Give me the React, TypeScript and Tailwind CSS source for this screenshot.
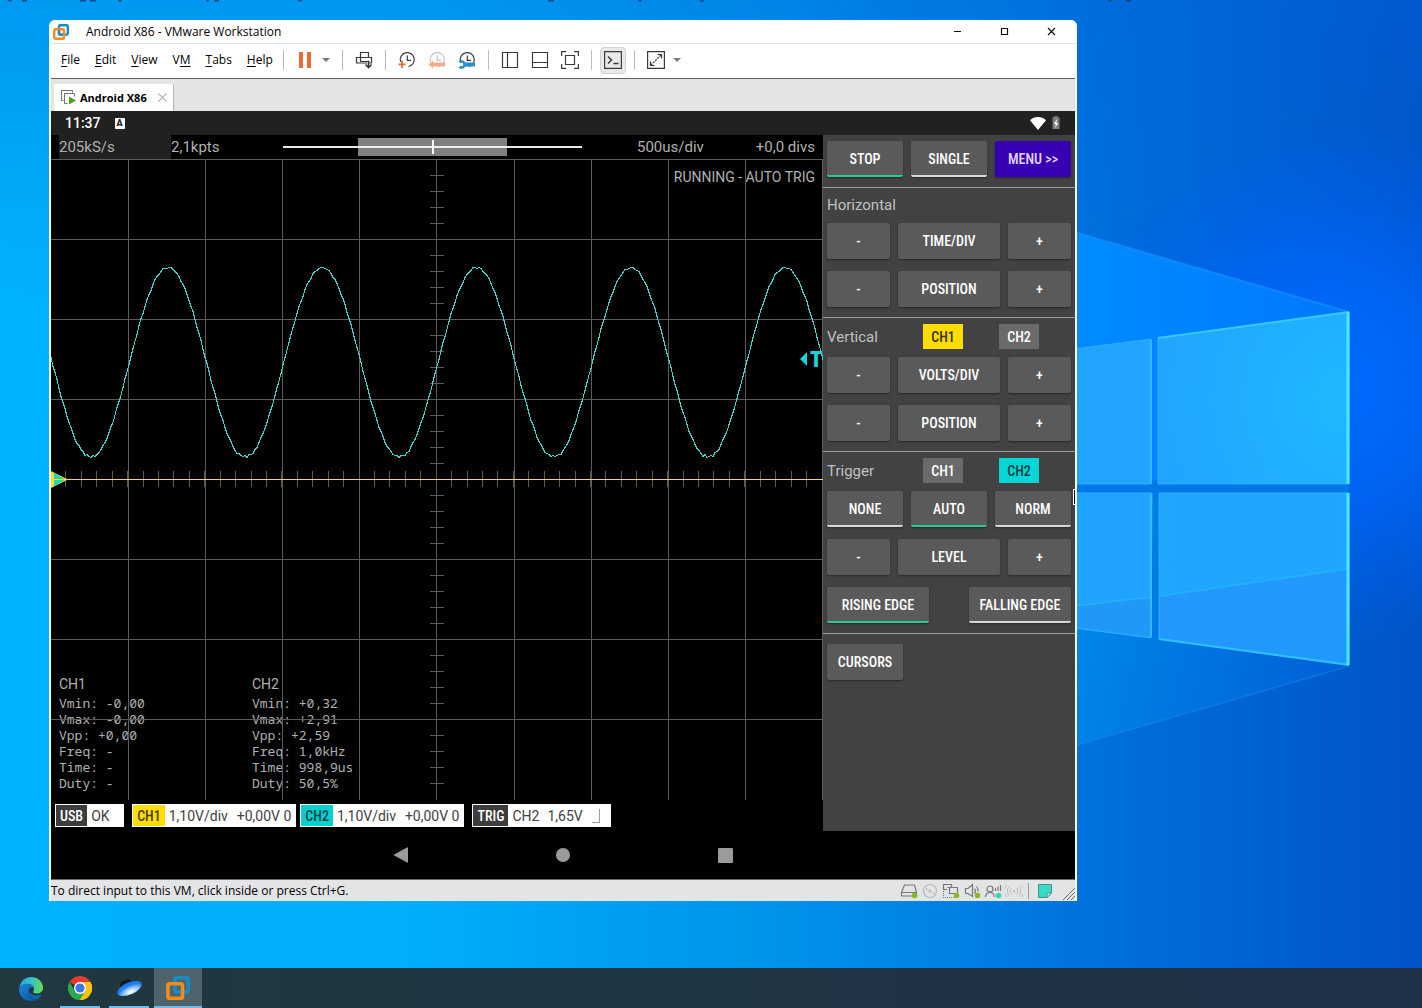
import React from "react";

const CONDENSED = "font-['Roboto_Condensed','Roboto',sans-serif]";
const ROBOTO = "font-['Roboto',sans-serif]";

function Wallpaper() {
  return (
    <svg
      className="absolute inset-0 h-full w-full"
      viewBox="0 0 1422 1008"
      preserveAspectRatio="none"
      aria-hidden="true"
    >
      <defs>
        <linearGradient id="wp-base" x1="0" y1="0" x2="1422" y2="0" gradientUnits="userSpaceOnUse">
          <stop offset="0" stopColor="#00b2fc" />
          <stop offset="0.3" stopColor="#00adfb" />
          <stop offset="0.55" stopColor="#0093ec" />
          <stop offset="0.78" stopColor="#006fdc" />
          <stop offset="1" stopColor="#0054c8" />
        </linearGradient>
        <linearGradient id="wp-top" x1="0" y1="0" x2="0" y2="300" gradientUnits="userSpaceOnUse">
          <stop offset="0" stopColor="#0065dc" stopOpacity="0.32" />
          <stop offset="1" stopColor="#0065dc" stopOpacity="0" />
        </linearGradient>
        <radialGradient id="wp-glow" cx="1330" cy="385" r="260" gradientUnits="userSpaceOnUse">
          <stop offset="0" stopColor="#006cff" />
          <stop offset="0.45" stopColor="#0066fb" stopOpacity="0.8" />
          <stop offset="1" stopColor="#0060f0" stopOpacity="0" />
        </radialGradient>
        <linearGradient id="wp-beam" x1="1077" y1="0" x2="1349" y2="0" gradientUnits="userSpaceOnUse">
          <stop offset="0" stopColor="#008cff" />
          <stop offset="1" stopColor="#0078ff" />
        </linearGradient>
        <linearGradient id="wp-low" x1="1077" y1="640" x2="1330" y2="700" gradientUnits="userSpaceOnUse">
          <stop offset="0" stopColor="#0086e8" />
          <stop offset="1" stopColor="#0060d8" />
        </linearGradient>
        <radialGradient id="wp-pane" cx="1349" cy="400" r="210" gradientUnits="userSpaceOnUse">
          <stop offset="0" stopColor="#20b8ff" />
          <stop offset="1" stopColor="#20a4ff" />
        </radialGradient>
      </defs>
      <rect width="1422" height="1008" fill="url(#wp-base)" />
      <rect width="1422" height="300" fill="url(#wp-top)" />
      <rect width="1422" height="1008" fill="url(#wp-glow)" />
      <polygon points="900,182 1349,312 1349,490 900,490" fill="url(#wp-beam)" />
      <polygon points="900,490 1349,490 1349,666 900,797" fill="url(#wp-low)" />
      <rect x="1050" y="480" width="299" height="18" fill="#0078e8" />
      <path d="M1050 225 1349 312" stroke="#1c9cff" strokeWidth="2" opacity="0.5" />
      <path d="M1050 753 1349 666" stroke="#1488ee" strokeWidth="1.5" opacity="0.5" />
      <g stroke="#3db8ff" strokeOpacity="0.7">
        <polygon points="1050,352 1151,339 1151,484 1050,484" fill="#20a4ff" />
        <polygon points="1158,338 1349,312 1349,484 1158,484" fill="url(#wp-pane)" />
        <polygon points="1050,493 1152,493 1151,638 1050,625" fill="#20a2ff" />
        <polygon points="1159,493 1349,493 1349,665 1159,639" fill="#20a6ff" />
      </g>
      <polygon points="1050,609 1151,597 1151,637 1050,624" fill="#2098f8" />
      <polygon points="1160,596 1347,569 1347,663 1160,638" fill="#2298fc" />
      <path d="M1050 609 1151 597M1160 596 1347 569" stroke="#22b4ff" strokeWidth="2" opacity="0.8" />
      <path d="M1158 338 1349 312" stroke="#38c8ff" strokeWidth="2" />
      <path d="M1159 639 1349 665" stroke="#30c0ff" strokeWidth="2" />
      <path d="M1348 312V484M1348 493V665" stroke="#48e8ff" strokeWidth="3" />
      <path d="M1151 340V484M1151 494V637" stroke="#3cc0ff" strokeWidth="1.5" />
      <path
        d="M8 0h4M22 0h5M80 0h6M90 0h6M118 0h4M206 0h3M214 0h5M298 0h4M548 0h6M638 0h4M700 0h4M1108 0h4M1126 0h5"
        stroke="#0a3e70"
        strokeWidth="3"
        opacity="0.8"
      />
    </svg>
  );
}

function VmLogo({ className }: { className: string }) {
  return (
    <svg viewBox="0 0 24 24" className={className} fill="none" strokeWidth="3.6" aria-hidden="true">
      <rect x="9" y="1.9" width="13.2" height="14" rx="1.8" stroke="#1a8cc4" />
      <rect x="1.9" y="7.800" width="14.600" height="14.400" rx="1.8" stroke="#f28c1b" />
      <path d="M9 9.500v4.600a1.800 1.800 0 0 0 1.800 1.800h3.800" stroke="#1a8cc4" />
    </svg>
  );
}

function WindowButton({ label, d }: { label: string; d: string }) {
  return (
    <button type="button" aria-label={label} className="flex h-6 w-[47px] items-center justify-center">
      <svg viewBox="0 0 9 9" className="h-[9px] w-[9px]" fill="none" stroke="#111" strokeWidth="1.2">
        <path d={d} />
      </svg>
    </button>
  );
}

function Tool({ label, active, children }: { label: string; active?: boolean; children: React.ReactNode }) {
  return (
    <button type="button" aria-label={label} className="flex w-[30px] justify-center">
      <span
        className={
          active
            ? "flex h-[27px] w-[26px] items-center justify-center rounded border border-[#d2d2d4] bg-[#e9e9eb]"
            : "flex h-[27px] w-[26px] items-center justify-center"
        }
      >
        <svg viewBox="0 0 18 18" className="h-[18px] w-[18px] shrink-0" fill="none" stroke="#3a3a3c" strokeWidth="1.2">
          {children}
        </svg>
      </span>
    </button>
  );
}

function Caret({ label }: { label: string }) {
  return (
    <button type="button" aria-label={label} className="flex w-4 items-center pl-0.5">
      <svg viewBox="0 0 8 4" className="h-1 w-2" fill="#7c7c7e">
        <path d="M0 0h8L4 4z" />
      </svg>
    </button>
  );
}

function Sep() {
  return <span className="mx-1.5 h-5 w-px shrink-0 bg-[#bcbcbe]" />;
}

function Clock({ color }: { color: string }) {
  return (
    <>
      <path d="M2.6 10.8A7 7 0 1 1 10.500 15.500" stroke={color} />
      <path d="M9.3 4.500V9.400H13" stroke={color} />
    </>
  );
}

const MENUS: [string, string, string][] = [
  ["", "F", "ile"],
  ["", "E", "dit"],
  ["", "V", "iew"],
  ["V", "M", ""],
  ["", "T", "abs"],
  ["", "H", "elp"],
];

function Toolbar() {
  return (
    <div className="flex h-[34px] items-center bg-white pb-0.5 pl-[10px]">
      <nav className="flex w-[216px] shrink-0 gap-[15px] text-[12px] leading-4 text-black">
        {MENUS.map(([a, b, c]) => (
          <button type="button" key={a + b + c}>
            {a}
            <u className="underline-offset-2">{b}</u>
            {c}
          </button>
        ))}
      </nav>
      <Sep />
      <Tool label="Suspend">
        <path d="M5 1V17M13 1V17" stroke="#ec6b32" strokeWidth="4" />
      </Tool>
      <Caret label="Power options" />
      <Sep />
      <Tool label="Send Ctrl+Alt+Del">
        <path d="M5.500 6.500v-5h8v5M14 12h2.500V6.500h-15V12H12M5.500 6.500v4h8" />
        <path d="M13.500 9.500V16M10.500 13.500l3 3 3-3" strokeWidth="1.600" />
      </Tool>
      <Sep />
      <Tool label="Take snapshot">
        <Clock color="#3a3a3c" />
        <path d="M4 9.500V17M.5 13.300H7.500" stroke="#ec6b32" strokeWidth="1.800" />
      </Tool>
      <Tool label="Revert snapshot">
        <Clock color="#c4c4c6" />
        <path d="M5 9.500 .5 13.500 5 17.500z" fill="#f6ab88" stroke="none" />
        <path d="M3 13.500H17" stroke="#f6ab88" strokeWidth="4" />
      </Tool>
      <Tool label="Manage snapshots">
        <Clock color="#3a3a3c" />
        <path d="M6 13.500H17" stroke="#2b8fc8" strokeWidth="4" />
        <path d="M1.500 11.200A3 3 0 1 1 1.500 15.800" stroke="#2b8fc8" strokeWidth="2.600" />
      </Tool>
      <Sep />
      <Tool label="Show library">
        <path d="M1.500 1.500h15v15h-15zM6.500 1.500v15" />
      </Tool>
      <Tool label="Show thumbnail bar">
        <path d="M1.500 1.500h15v15h-15zM1.500 11.500h15" />
      </Tool>
      <Tool label="Stretch guest">
        <path d="M4.500 4.500h9v9h-9zM.6 5V.6H5M13 .6h4.400V5M17.400 13v4.400H13M5 17.400H.6V13" />
      </Tool>
      <Sep />
      <Tool label="Console view" active>
        <path d="M.6.6h16.800v16.800H.6z" />
        <path d="M4 5.500l3.500 3.500L4 12.500M9.500 12.500h5" strokeWidth="1.500" />
      </Tool>
      <Sep />
      <Tool label="Full screen">
        <path d="M.6.6h16.800v16.800H.6z" />
        <path d="M10.500 3.500h4v4M3.500 10.500v4h4" />
        <path d="M4 14 14 4" strokeDasharray="2 1" />
      </Tool>
      <Caret label="Full screen options" />
    </div>
  );
}

const GRID_X = [77, 154, 231, 308, 385, 463, 540, 617, 694, 771];
const GRID_Y = [0, 80, 160, 240, 400, 480, 560];

const wave = Array.from({ length: 387 }, (_, i) => {
  const x = i * 2;
  const c = Math.cos(((x - 117) * 2 * Math.PI) / 154.3);
  const ripple = c < -0.93 ? Math.sin(x * 1.9) : Math.sin(x * 0.83) * 0.8;
  const y = Math.max(108, Math.round(203 - 95 * c + ripple - (c < -0.98 ? 1 : 0)));
  return `${x},${y}.5`;
}).join(" ");

const ticks = [
  ...Array.from({ length: 49 }, (_, i) => `M${Math.round((i + 1) * 15.43) - 0.5} 312v16`),
  ...Array.from({ length: 40 }, (_, i) => `M379 ${i * 16 + 0.5}h14`),
].join("");

const gridPath = [...GRID_X.map((x) => `M${x + 0.5} 0V641`), ...GRID_Y.map((y) => `M0 ${y + 0.5}H772`)].join("");

const READINGS = [
  { name: "CH1", rows: ["Vmin: -0,00", "Vmax: -0,00", "Vpp: +0,00", "Freq: -", "Time: -", "Duty: -"] },
  { name: "CH2", rows: ["Vmin: +0,32", "Vmax: +2,91", "Vpp: +2,59", "Freq: 1,0kHz", "Time: 998,9us", "Duty: 50,5%"] },
];

function Plot() {
  return (
    <div className="relative flex min-h-[400px] flex-1 flex-col justify-between overflow-hidden">
      <p className="pt-2.5 pr-2 text-right text-[14px] leading-4">RUNNING - AUTO TRIG</p>
      <div className="flex pb-[9px]">
        {READINGS.map((r) => (
          <div key={r.name} className="w-1/4 pl-2">
            <p className="pb-px text-[14px] leading-5">{r.name}</p>
            <pre className="font-['Noto_Sans_Mono','DejaVu_Sans_Mono',monospace] text-[13px] leading-4">
              {r.rows.join("\n")}
            </pre>
          </div>
        ))}
      </div>
      <svg
        className="pointer-events-none absolute inset-0 h-full w-full"
        viewBox="0 0 772 641"
        preserveAspectRatio="none"
        fill="none"
        aria-label="Oscilloscope trace"
      >
        <g shapeRendering="crispEdges">
          <path d={gridPath} stroke="#5c5c5c" />
          <path d={ticks} stroke="#5c5c5c" />
          <rect y="320" width="772" height="1" fill="#f5dc48" />
        </g>
        <polyline points={wave} stroke="#48d2c8" strokeWidth="1" shapeRendering="crispEdges" />
        <path d="M0 312v17l17-8.500z" fill="#f4e226" />
        <path d="M3 313.500v14l11-7z" fill="#1fd6b8" />
        <path d="M3 320.500h13" stroke="#f4e226" />
        <path d="M756 193v14l-7-7z" fill="#16d4d8" />
        <text x="759" y="208" fill="#16d4d8" className="font-['Roboto_Condensed','Roboto',sans-serif] text-[22px] font-black">
          T
        </text>
      </svg>
    </div>
  );
}

function Chip({ tag, tagClass, children }: { tag: string; tagClass: string; children: React.ReactNode }) {
  return (
    <div className="flex h-[23px] items-center bg-white p-px text-[14px] text-[#424242]">
      <span className={`${CONDENSED} flex h-full items-center px-1 pt-px font-medium ${tagClass}`}>{tag}</span>
      {children}
    </div>
  );
}

type Line = "none" | "green" | "white";

function Btn({ children, size, line = "none" }: { children: string; size: "sm" | "md" | "lg"; line?: Line }) {
  const widths = { sm: "w-[63px]", md: "w-[76px]", lg: "w-[102px]" };
  const lines = {
    none: "pt-px",
    green: "border-b-2 border-[#2cc896] pt-[3px]",
    white: "border-b-2 border-[#d8d8d8] pt-[3px]",
  };
  return (
    <button
      type="button"
      className={`h-9 rounded-xs bg-[#5a5a5b] font-medium text-white shadow-[0_1px_2px_rgba(0,0,0,0.4)] ${widths[size]} ${lines[line]}`}
    >
      {children}
    </button>
  );
}

function Stepper({ label }: { label: string }) {
  return (
    <div className="flex justify-between">
      <Btn size="sm">-</Btn>
      <Btn size="lg">{label}</Btn>
      <Btn size="sm">+</Btn>
    </div>
  );
}

function ChannelButton({ label, className }: { label: string; className: string }) {
  return (
    <button type="button" className={`h-[25px] w-10 pt-px font-medium ${className}`}>
      {label}
    </button>
  );
}

function ChannelHeader({ title, active }: { title: string; active: "CH1" | "CH2" }) {
  return (
    <div className={`mb-2 flex items-center ${CONDENSED}`}>
      <h2 className={`w-24 pt-px text-[15px] text-[#c0c0c0] ${ROBOTO}`}>{title}</h2>
      <ChannelButton label="CH1" className={active === "CH1" ? "bg-[#ffdd00] text-[#3a3000]" : "bg-[#6a6a6a] text-white"} />
      <ChannelButton
        label="CH2"
        className={active === "CH2" ? "ml-9 bg-[#06d6d6] text-[#003c3c]" : "ml-9 bg-[#6a6a6a] text-white"}
      />
    </div>
  );
}

function ControlPanel() {
  return (
    <aside className={`relative w-[252px] shrink-0 bg-[#424242] text-[14px] ${CONDENSED}`}>
      <section className="flex justify-between border-b border-[#9c9c9c] px-1 pt-1.5 pb-2.5">
        <Btn size="md" line="green">STOP</Btn>
        <Btn size="md" line="white">SINGLE</Btn>
        <button
          type="button"
          className="h-9 w-[76px] rounded-xs bg-[#3700b3] pt-px font-medium text-[#e4d8ff] shadow-[0_1px_2px_rgba(0,0,0,0.4)]"
        >
          MENU &gt;&gt;
        </button>
      </section>
      <section className="flex flex-col gap-3 border-b border-[#9c9c9c] px-1 pb-2.5">
        <h2 className={`-mb-3 h-[35px] text-[15px] leading-[34px] text-[#c0c0c0] ${ROBOTO}`}>Horizontal</h2>
        <Stepper label="TIME/DIV" />
        <Stepper label="POSITION" />
      </section>
      <section className="border-b border-[#9c9c9c] px-1 pt-1.5 pb-2.5">
        <ChannelHeader title="Vertical" active="CH1" />
        <div className="flex flex-col gap-3">
          <Stepper label="VOLTS/DIV" />
          <Stepper label="POSITION" />
        </div>
      </section>
      <section className="border-b border-[#9c9c9c] px-1 pt-1.5 pb-2.5">
        <ChannelHeader title="Trigger" active="CH2" />
        <div className="flex flex-col gap-3">
          <div className="flex justify-between">
            <Btn size="md" line="white">NONE</Btn>
            <Btn size="md" line="green">AUTO</Btn>
            <Btn size="md" line="white">NORM</Btn>
          </div>
          <Stepper label="LEVEL" />
          <div className="flex justify-between">
            <Btn size="lg" line="green">RISING EDGE</Btn>
            <Btn size="lg" line="white">FALLING EDGE</Btn>
          </div>
        </div>
      </section>
      <section className="px-1 pt-2.5">
        <Btn size="md">CURSORS</Btn>
      </section>
      <span className="absolute top-[354px] right-0 h-4 w-0.5 border-y border-l border-white bg-black" />
    </aside>
  );
}

function Scope() {
  return (
    <div className={`flex min-h-0 flex-1 bg-black text-[#b0b0b0] ${ROBOTO}`}>
      <div className="flex min-w-0 flex-1 flex-col">
        <div className="flex h-6 items-center px-2 text-[15px] leading-6">
          <span className="w-28 bg-[#212121]">205kS/s</span>
          <span className="w-28">2,1kpts</span>
          <div className="grid h-[18px] flex-1 grid-cols-4 items-center bg-[linear-gradient(#e8e8e8,#e8e8e8)] bg-[length:100%_2px] bg-center bg-no-repeat">
            <div className="col-span-2 col-start-2 flex h-[18px] items-center justify-center bg-[linear-gradient(#808080_8px,#ededed_8px,#ededed_10px,#808080_10px)]">
              <span className="h-3.5 w-0.5 bg-white" />
            </div>
          </div>
          <div className="flex w-[233px] justify-between pl-[55px]">
            <span>500us/div</span>
            <span>+0,0 divs</span>
          </div>
        </div>
        <Plot />
        <div className="flex h-[31px] items-start gap-2 px-1 pt-1">
          <Chip tag="USB" tagClass="bg-[#3c3c3c] text-white">
            <span className="w-9 pt-px pl-1">OK</span>
          </Chip>
          <div className="flex gap-1">
            <Chip tag="CH1" tagClass="bg-[#ffdd00] text-[#4a3c00]">
              <span className="w-[72px] pt-px pl-1">1,10V/div</span>
              <span className="pt-px pr-1">+0,00V 0</span>
            </Chip>
            <Chip tag="CH2" tagClass="bg-[#06d0d0] text-[#004444]">
              <span className="w-[72px] pt-px pl-1">1,10V/div</span>
              <span className="pt-px pr-1">+0,00V 0</span>
            </Chip>
          </div>
          <Chip tag="TRIG" tagClass="bg-[#3c3c3c] text-white">
            <span className="w-[39px] pt-px pl-1">CH2</span>
            <span className="w-[45px] pt-px">1,65V</span>
            <span className="mr-2.5 h-3.5 w-2 border-r border-b border-[#9a9a9a]" />
          </Chip>
        </div>
      </div>
      <ControlPanel />
    </div>
  );
}

function AndroidScreen() {
  return (
    <div className="flex min-h-0 flex-1 flex-col bg-black">
      <div className={`flex h-6 items-center bg-[#212121] pr-[15px] pl-[14px] text-white ${ROBOTO}`}>
        <span className="text-[14px] leading-6 font-medium">11:37</span>
        <span className="ml-[14px] flex h-[11px] w-[10px] items-center justify-center rounded-[1px] bg-white text-[9px] leading-none font-black text-[#212121]">
          A
        </span>
        <svg viewBox="0 0 16 13" className="ml-auto h-[13px] w-4" fill="#fff" aria-label="Wi-Fi">
          <path d="M8 13 0 3.200C4.400-1 11.600-1 16 3.200z" />
        </svg>
        <svg viewBox="0 0 8 14" className="ml-[6px] h-3.5 w-2" aria-label="Battery charging">
          <path d="M2.500 0h3v1.300H7.500V13H.5V1.300h2z" fill="#7c7c7c" />
          <path d="M5 3 1.800 8h1.900L3.200 12 6.300 7H4.500z" fill="#fff" />
        </svg>
      </div>
      <Scope />
      <div className="flex h-12 shrink-0 items-center justify-center gap-[114px]">
        <button type="button" aria-label="Back" className="flex w-12 justify-center">
          <svg viewBox="0 0 16 16" className="h-4 w-4" fill="#9b9b9b">
            <path d="M15 1v14a.7.7 0 0 1-1 .6L1.200 8.600a.7.7 0 0 1 0-1.200L14 .4a.7.7 0 0 1 1 .6z" />
          </svg>
        </button>
        <button type="button" aria-label="Home" className="flex w-12 justify-center">
          <span className="h-3.5 w-3.5 rounded-full bg-[#9b9b9b]" />
        </button>
        <button type="button" aria-label="Recents" className="flex w-12 justify-center">
          <span className="h-[15px] w-[15px] rounded-[1px] bg-[#9b9b9b]" />
        </button>
      </div>
    </div>
  );
}

function StatusIcon({ label, dot, children }: { label: string; dot?: string; children: React.ReactNode }) {
  return (
    <button type="button" aria-label={label} className="flex w-[21px] justify-center">
      <svg viewBox="0 0 18 16" className="h-4 w-[18px]" fill="none" stroke="#77787c" strokeWidth="1.200">
        {children}
        {dot && <circle cx="14.500" cy="12.500" r="2.800" fill={dot} stroke="none" />}
      </svg>
    </button>
  );
}

function StatusBar() {
  return (
    <footer className="flex h-[22px] items-center border-t border-[#6c6c6e] bg-[#e3e4e6] text-[12px] leading-4 text-black">
      <span className="mr-auto">To direct input to this VM, click inside or press Ctrl+G.</span>
      <StatusIcon label="Hard disk" dot="#8ab81e">
        <path d="M4.500 2h10l2 7.500V13h-15V9.500zM1.500 9.500h15" />
      </StatusIcon>
      <StatusIcon label="CD/DVD">
        <g stroke="#b6b7ba">
          <circle cx="9" cy="8" r="6.500" />
          <circle cx="9" cy="8" r="1" />
          <path d="M5 5.500 6.500 7M12 10l1 1" />
        </g>
      </StatusIcon>
      <StatusIcon label="Network adapter" dot="#8ab81e">
        <path d="M5 6.500H1.500v-5h8v3M5.500 4.500h10v6h-8v-6" />
        <path d="M1.500 8v6.500H12" strokeDasharray="1 1" />
      </StatusIcon>
      <StatusIcon label="Sound card" dot="#8ab81e">
        <path d="M2.500 5.500H5l4.500-4v12L5 10.500H2.500zM11.500 5.500a4 4 0 0 1 0 5M13.500 3.500a7 7 0 0 1 1.500 5" />
      </StatusIcon>
      <StatusIcon label="Camera" dot="#3fd0b8">
        <circle cx="6" cy="6" r="3" />
        <path d="M1.500 14c0-3 2-4.500 4.500-4.500s4 1.500 4.500 4.500M11.500 8V5M14 8V3.500M16.500 8V2" />
      </StatusIcon>
      <StatusIcon label="Wireless">
        <g stroke="#bcbdc0">
          <circle cx="9" cy="8" r=".7" />
          <path d="M6.500 5a4 4 0 0 0 0 6M11.500 5a4 4 0 0 1 0 6M4 3.500a7 7 0 0 0 0 9M14 3.500a7 7 0 0 1 0 9M1.500 2a10 10 0 0 0 0 12M16.500 2a10 10 0 0 1 0 12" strokeWidth="1" />
        </g>
      </StatusIcon>
      <span className="ml-1 h-4 w-px bg-[#9a9a9c]" />
      <button type="button" aria-label="Message log" className="ml-[9px] flex">
        <svg viewBox="0 0 14 14" className="h-3.5 w-3.5" stroke="#4b8f88">
          <path d="M.5.5h13V9L9 13.500H.5z" fill="#34dcc4" />
          <path d="M9 13.500V9h4.500z" fill="#c8f4ec" />
        </svg>
      </button>
      <svg viewBox="0 0 12 12" className="mt-1.5 ml-[11px] h-3 w-3" stroke="#6e6e70" aria-hidden="true">
        <path d="M0 12 12 0M4 12l8-8M8 12l4-4" />
      </svg>
    </footer>
  );
}

function VmWindow() {
  return (
    <main className="relative mt-5 mr-[345px] mb-[67px] ml-[49px] flex flex-1 flex-col overflow-hidden rounded-t-md border-x-2 border-white bg-white">
      <header className="flex h-6 items-center border-b border-[#e2e2e4] bg-white">
        <VmLogo className="ml-0.5 h-4 w-4" />
        <h1 className="ml-[17px] text-[12px] leading-4 text-black">Android X86 - VMware Workstation</h1>
        <div className="ml-auto flex">
          <WindowButton label="Minimize" d="M1 4.500h7" />
          <WindowButton label="Maximize" d="M1.500 1.500h6v6h-6z" />
          <WindowButton label="Close" d="M1 1l7 7M8 1 1 8" />
        </div>
      </header>
      <Toolbar />
      <div className="flex h-[33px] items-end border-t border-[#5e5e60] bg-[#e3e4e6] pl-[3px]">
        <div className="flex h-[27px] w-[120px] items-center rounded-t-xs border-r border-[#b4b4b6] bg-white pl-[7px]">
          <svg viewBox="0 0 15 15" className="h-[15px] w-[15px]" fill="none" stroke="#6f6f71" aria-hidden="true">
            <path d="M2.500 10.500h-2V.5h11v2M6.500 13.500h-3v-10h10v3" />
            <path d="M8 6.500v8l7-4z" fill="#4e9e2c" stroke="none" />
          </svg>
          <span className="ml-1 text-[11px] leading-4 font-bold text-black">Android X86</span>
          <button type="button" aria-label="Close tab" className="mr-1.5 ml-auto">
            <svg viewBox="0 0 10 10" className="h-[9px] w-[9px]" stroke="#b9b9bb" strokeWidth="1.400">
              <path d="M.5.5l9 9M9.500.5l-9 9" />
            </svg>
          </button>
        </div>
      </div>
      <AndroidScreen />
      <StatusBar />
    </main>
  );
}

function TaskButton({ label, state, children }: { label: string; state: "idle" | "open" | "active"; children: React.ReactNode }) {
  const bg = state === "active" ? "bg-[#4e636b]" : "";
  const bar = { idle: "", open: "h-0.5 w-10 bg-[#76b9ed]", active: "h-0.5 w-12 bg-[#76b9ed]" };
  return (
    <button type="button" aria-label={label} className={`flex h-10 w-12 flex-col items-center justify-between ${bg}`}>
      <span className="flex flex-1 items-center pt-0.5">{children}</span>
      <span className={bar[state]} />
    </button>
  );
}

function Taskbar() {
  return (
    <footer className="relative flex h-10 gap-px bg-linear-to-r from-[#21383f] to-[#1f3148] pl-[7px]">
      <TaskButton label="Microsoft Edge" state="idle">
        <svg viewBox="0 0 24 24" className="h-6 w-6">
          <defs>
            <linearGradient id="edge-top" x1="0" y1="0.3" x2="1" y2="0.4">
              <stop offset="0" stopColor="#2aa5dc" />
              <stop offset="0.5" stopColor="#35c1c9" />
              <stop offset="1" stopColor="#66dd55" />
            </linearGradient>
            <linearGradient id="edge-low" x1="0" y1="0" x2="1" y2="1">
              <stop offset="0" stopColor="#1b86d6" />
              <stop offset="1" stopColor="#0c52a0" />
            </linearGradient>
          </defs>
          <path d="M.3 11C1 4.500 6 0 12 0c7 0 12 5 12 10.500 0 4-3 6-6.300 6-2.400 0-3.600-.9-3.600-1.500s.9-1.300.9-3.100C15 9.300 12.500 7 9 7 4.500 7 1 9 .3 11z" fill="url(#edge-top)" />
          <path d="M.2 11.500C.8 8.500 4.500 6.700 8.300 6.700c3.200 0 5.700 1.800 6.500 4.200C13.700 9.600 9.500 10.500 9.300 15c-.2 4.500 4 8.300 8.500 7.400C10.500 26.500 0 22 0 12.500z" fill="url(#edge-low)" />
          <path d="M9.500 13c-1.200 4.500 2.500 9.300 8.300 9.400 2.400-1.200 4-3 4.700-4.500.3-.6-.2-.8-.7-.5-4.300 2.200-11.300 1-12.300-4.400z" fill="#1266b4" />
        </svg>
      </TaskButton>
      <TaskButton label="Google Chrome" state="open">
        <svg viewBox="0 0 24 24" className="h-6 w-6">
          <path d="M12 12 1.600 6A12 12 0 0 1 22.400 6z" fill="#e33b2e" />
          <path d="M12 12 22.400 6A12 12 0 0 1 12 24z" fill="#fbc116" />
          <path d="M12 6h10.400A12 12 0 0 1 12 24l5-9z" fill="#fbc116" />
          <path d="M1.600 6 6.800 15 12 18l0 6A12 12 0 0 1 1.600 6z" fill="#2da94f" />
          <path d="M17.200 15 12 24A12 12 0 0 1 10 23.800L12 17z" fill="#2da94f" />
          <circle cx="12" cy="12" r="6" fill="#fff" />
          <circle cx="12" cy="12" r="4.600" fill="#3b78e7" />
        </svg>
      </TaskButton>
      <TaskButton label="Cloud storage" state="open">
        <svg viewBox="0 0 26 20" className="h-5 w-[26px]">
          <defs>
            <radialGradient id="saucer" cx="0.5" cy="0.8" r="0.55">
              <stop offset="0" stopColor="#ffffff" />
              <stop offset="0.35" stopColor="#c4e0ff" />
              <stop offset="1" stopColor="#1f7cf0" />
            </radialGradient>
          </defs>
          <ellipse cx="10" cy="6" rx="6" ry="4.500" fill="#101a2a" transform="rotate(-24 10 6)" />
          <ellipse cx="13.500" cy="10.500" rx="13" ry="6" fill="url(#saucer)" transform="rotate(-24 13.500 10.500)" />
        </svg>
      </TaskButton>
      <TaskButton label="VMware Workstation" state="active">
        <VmLogo className="h-6 w-6" />
      </TaskButton>
    </footer>
  );
}

export default function App() {
  return (
    <div className="relative flex min-h-screen flex-col font-['Segoe_UI','Open_Sans','Noto_Sans',sans-serif]">
      <Wallpaper />
      <VmWindow />
      <Taskbar />
    </div>
  );
}
